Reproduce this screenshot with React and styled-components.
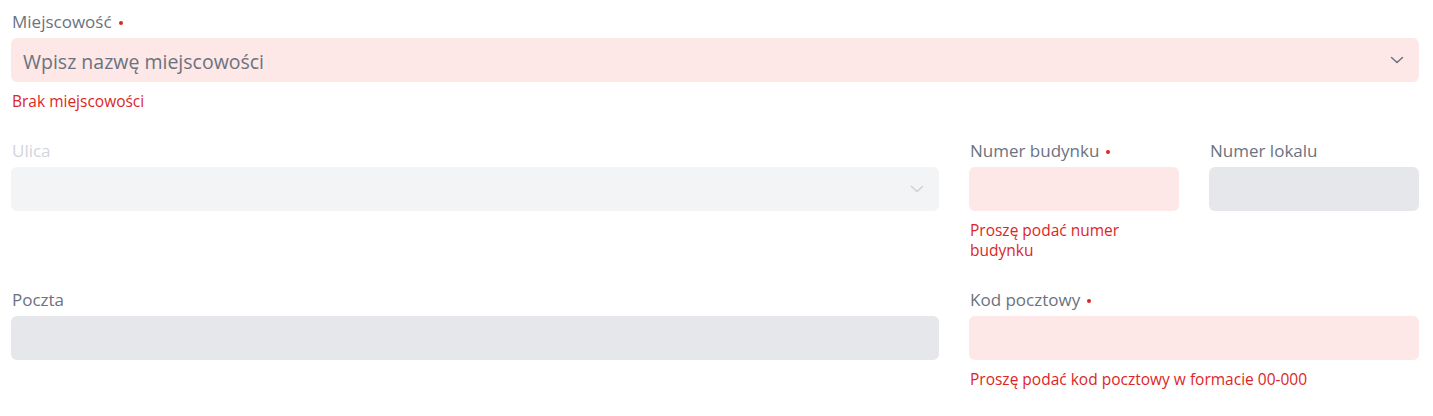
import styled, { createGlobalStyle } from 'styled-components';

const GlobalStyle = createGlobalStyle`
  body {
    margin: 0;
    background: #ffffff;
    font-family: "Open Sans", "Noto Sans", sans-serif;
  }
`;

const Form = styled.div`
  padding: 10px 14px 0 11px;
  display: flex;
  flex-direction: column;
  gap: 28px;
`;

const Row = styled.div`
  display: grid;
  grid-template-columns: ${(p) => p.$cols || '1fr'};
  column-gap: 30px;
  align-items: start;
`;

const Field = styled.div`
  display: flex;
  flex-direction: column;
  min-width: 0;
`;

const Label = styled.div`
  height: 24px;
  line-height: 24px;
  margin-bottom: 4px;
  padding-left: 1px;
  font-size: 17px;
  color: ${(p) => (p.$disabled ? '#d1d5db' : '#6b7280')};
  display: flex;
  align-items: center;
  gap: 7px;
`;

const Dot = styled.span`
  width: 4px;
  height: 4px;
  border-radius: 50%;
  background: #dc2626;
  margin-top: 1px;
`;

const Box = styled.div`
  height: 44px;
  border-radius: 6px;
  background: ${(p) =>
    p.$error ? '#fde7e7' : p.$light ? '#f3f4f6' : '#e5e7eb'};
  display: flex;
  align-items: center;
  justify-content: space-between;
  padding: 0 14px 0 12px;
  box-sizing: border-box;
`;

const Placeholder = styled.span`
  font-size: 19.5px;
  color: #6b7280;
  margin-top: 3px;
`;

const Error = styled.div`
  margin-top: 9px;
  padding-left: 1px;
  font-size: 15.5px;
  line-height: 20px;
  color: #dc2626;
`;

const Chevron = ({ color }) => (
  <svg width="16" height="16" viewBox="0 0 16 16" fill="none" style={{ marginLeft: 'auto' }}>
    <path d="M2.5 5.5 L8 10.5 L13.5 5.5" stroke={color} strokeWidth="1.5" strokeLinecap="round" strokeLinejoin="round" />
  </svg>
);

export default function App() {
  return (
    <>
      <GlobalStyle />
      <Form>
        <Row>
          <Field>
            <Label>Miejscowość <Dot /></Label>
            <Box $error>
              <Placeholder>Wpisz nazwę miejscowości</Placeholder>
              <Chevron color="#6b7280" />
            </Box>
            <Error>Brak miejscowości</Error>
          </Field>
        </Row>
        <Row $cols="minmax(0, 1fr) 210px 210px">
          <Field>
            <Label $disabled>Ulica</Label>
            <Box $light>
              <Chevron color="#cbd0d6" />
            </Box>
          </Field>
          <Field>
            <Label>Numer budynku <Dot /></Label>
            <Box $error />
            <Error>Proszę podać numer budynku</Error>
          </Field>
          <Field>
            <Label>Numer lokalu</Label>
            <Box />
          </Field>
        </Row>
        <Row $cols="minmax(0, 1fr) 450px">
          <Field>
            <Label>Poczta</Label>
            <Box />
          </Field>
          <Field>
            <Label>Kod pocztowy <Dot /></Label>
            <Box $error />
            <Error>Proszę podać kod pocztowy w formacie 00-000</Error>
          </Field>
        </Row>
      </Form>
    </>
  );
}
